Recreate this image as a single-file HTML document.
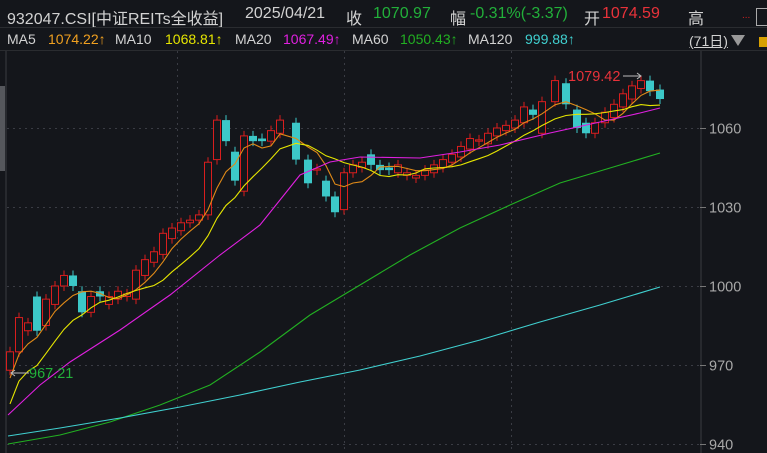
<!DOCTYPE html><html><head><meta charset="utf-8"><style>
html,body{margin:0;padding:0;background:#14161b;width:767px;height:453px;overflow:hidden;font-family:"Liberation Sans","Noto Sans CJK SC",sans-serif}
.r{position:absolute;white-space:nowrap;color:#d2d2d2}
.a{top:5px;font-size:16px}.b{top:31px;font-size:14px}
</style></head><body>
<div class="r a" style="left:7px">932047.CSI[中证REITs全收益]</div>
<div class="r a" style="left:245px">2025/04/21</div>
<div class="r a" style="left:346px">收</div>
<div class="r a" style="left:373px;color:#22b03a">1070.97</div>
<div class="r a" style="left:450px">幅</div>
<div class="r a" style="left:470px;color:#22b03a">-0.31%(-3.37)</div>
<div class="r a" style="left:584px">开</div>
<div class="r a" style="left:602px;color:#e8323a">1074.59</div>
<div class="r a" style="left:688px">高</div>
<div class="r" style="left:742px;top:10px;color:#d02020;font-size:10px">...</div>
<div style="position:absolute;left:756px;top:8px;width:11px;height:16px;border:1px solid #aaa;border-right:none"></div>
<div style="position:absolute;left:0;top:27px;width:767px;height:1px;background:#2a2c30"></div>
<div class="r b" style="left:7px">MA5</div><div class="r b" style="left:48px;color:#f0a020">1074.22↑</div>
<div class="r b" style="left:115px">MA10</div><div class="r b" style="left:165px;color:#e6e600">1068.81↑</div>
<div class="r b" style="left:235px">MA20</div><div class="r b" style="left:283px;color:#e020e0">1067.49↑</div>
<div class="r b" style="left:352px">MA60</div><div class="r b" style="left:400px;color:#22b022">1050.43↑</div>
<div class="r b" style="left:468px">MA120</div><div class="r b" style="left:525px;color:#40d0d0">999.88↑</div>
<div class="r b" style="left:689px;text-decoration:underline">(71日)</div>
<div style="position:absolute;left:731px;top:35px;width:0;height:0;border-left:7px solid transparent;border-right:7px solid transparent;border-top:11px solid #999"></div>
<div style="position:absolute;left:759px;top:37px;width:8px;height:10px;background:#d8a000"></div>
<div style="position:absolute;left:0;top:50px;width:767px;height:1px;background:#2a2c30"></div>
<svg id="s" width="767" height="453" style="position:absolute;left:0;top:0"></svg>
<script>
var s=document.getElementById('s'),h='';
function Y(p){return 128+(1060-p)*2.633}
h+='<line x1="6" y1="51" x2="6" y2="453" stroke="#3a3c40"/><rect x="0" y="86" width="5" height="85" fill="#55575c"/>';
h+='<line x1="701" y1="51" x2="701" y2="453" stroke="#3a3c40"/>';
[1060,1030,1000,970,940].forEach(function(p){var y=Math.round(Y(p))+.5;h+='<line x1="7" y1="'+y+'" x2="700" y2="'+y+'" stroke="#3a3c44" stroke-dasharray="2,4"/><line x1="700" y1="'+y+'" x2="706" y2="'+y+'" stroke="#777"/><text x="709" y="'+(y+5)+'" fill="#a8a8a8" font-size="14.5" font-family="Liberation Sans">'+p+'</text>'});
[177,344,511].forEach(function(x){h+='<line x1="'+x+'.5" y1="51" x2="'+x+'.5" y2="453" stroke="#3a3c44" stroke-dasharray="2,4"/>'});
var d=[[10,968,975],[19,975,988],[28,983,986],[37,996,983],[46,985,995],[55,993,1000],[64,1000,1004],[73,1004,1000],[82,998,990],[91,990,996],[100,998,996],[109,993,996],[118,995,998],[127,996,997],[136,995,1006],[145,1004,1010],[154,1009,1013],[163,1012,1020],[172,1018,1022],[181,1021,1024],[190,1024,1025],[199,1025,1027],[208,1027,1047],[217,1048,1063],[226,1063,1055],[235,1051,1040],[244,1036,1057],[253,1057,1055],[262,1056,1055],[271,1055,1059],[280,1058,1063],[296,1062,1048],[308,1048,1039],[317,1044,1044.5],[326,1040,1034],[335,1034,1028],[344,1029,1043],[353,1043,1046],[362,1045,1047],[371,1050,1046],[380,1046,1044],[389,1045,1044],[398,1043,1046],[407,1042,1043],[416,1041,1042],[425,1042,1044],[434,1043,1046],[443,1045,1048],[452,1047,1050],[461,1049,1053],[470,1052,1056],[479,1055,1055.5],[488,1054,1058],[497,1057,1060],[506,1059,1061],[515,1060,1063],[524,1062,1068],[533,1067,1065],[542,1058,1070],[555,1070,1078],[566,1077,1069],[577,1067,1060],[586,1062,1058],[595,1058,1062],[605,1062,1066],[614,1064,1069],[623,1068,1073],[632,1071,1076],[641,1075,1078],[650,1078,1074],[660,1074.6,1071]];
d.forEach(function(c){var o=c[1],cl=c[2],up=cl>=o,col=up?'#d81e1e':'#3cc8c8',t=Y(Math.max(o,cl)),b=Y(Math.min(o,cl));if(b-t<1)b=t+1;
h+='<line x1="'+c[0]+'" y1="'+(t-5)+'" x2="'+c[0]+'" y2="'+(b+5)+'" stroke="'+col+'"/>';
h+=up?'<rect x="'+(c[0]-3.5)+'" y="'+t+'" width="7" height="'+(b-t)+'" fill="#14161b" stroke="'+col+'"/>':'<rect x="'+(c[0]-4)+'" y="'+t+'" width="8" height="'+(b-t)+'" fill="'+col+'"/>'});
function ma(n,col){var pts=[];for(var i=0;i<d.length;i++){var a=Math.max(0,i-n+1),sm=0;for(var j=a;j<=i;j++)sm+=d[j][2];var v=sm/(i-a+1);if(i<n-1)v=v-(n-1-i)*(n==5?2.5:2.2);pts.push(d[i][0]+','+Y(v).toFixed(1))}h+='<polyline points="'+pts.join(' ')+'" fill="none" stroke="'+col+'" stroke-width="1.1"/>'}
ma(5,'#e08a18');ma(10,'#e6e600');
function pl(p,col){h+='<polyline points="'+p+'" fill="none" stroke="'+col+'" stroke-width="1.1"/>'}
pl('8,415 40,385 70,362 120,330 170,295 220,255 260,225 300,175 330,162 360,157 420,158 460,152 500,145 550,133 600,122 640,113 660,108','#e020e0');
pl('8,444 60,435 110,422 160,405 210,385 260,352 310,315 360,285 410,255 460,228 510,205 560,183 610,168 660,153','#22b022');
pl('8,436 60,428 120,418 180,407 240,395 300,382 360,370 420,356 480,340 540,322 600,305 660,287','#40d0d0');
h+='<text x="568" y="81" fill="#e8323a" font-size="14.5" font-family="Liberation Sans">1079.42</text><line x1="623" y1="76" x2="641" y2="76" stroke="#bbb"/><polyline points="637,73 641,76 637,79" fill="none" stroke="#bbb"/>';
h+='<line x1="12" y1="373" x2="29" y2="373" stroke="#bbb"/><polyline points="15,370 11,373 15,376" fill="none" stroke="#bbb"/><text x="29" y="378" fill="#22b03a" font-size="14.5" font-family="Liberation Sans">967.21</text>';
s.innerHTML=h;
</script></body></html>
